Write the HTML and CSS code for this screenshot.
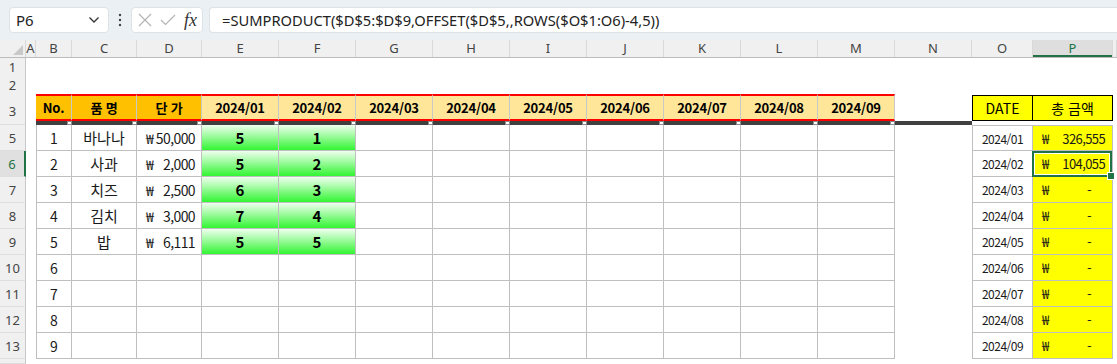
FILE: index.html
```html
<!DOCTYPE html>
<html lang="ko">
<head>
    <meta charset="UTF-8">
    <meta name="viewport" content="width=device-width, initial-scale=1.0">
    <title>총 금액 - SUMPRODUCT</title>
    <link rel="stylesheet" href="styles.css">
</head>
<body>
    <div class="toolbar">
        <div class="namebox">
            <span>P6</span>
            <svg width="12" height="8" viewBox="0 0 12 8"><polyline points="1.5,1.5 6,6 10.5,1.5" fill="none" stroke="#333" stroke-width="1.3"/></svg>
        </div>
        <svg class="dots" width="4" height="14" viewBox="0 0 4 14"><circle cx="2" cy="2" r="1.2"/><circle cx="2" cy="7" r="1.2"/><circle cx="2" cy="12" r="1.2"/></svg>
        <div class="fxbox">
            <svg width="14" height="14" viewBox="0 0 14 14"><path d="M1 1L13 13M13 1L1 13" stroke="#b4b4b4" stroke-width="1.2" fill="none"/></svg>
            <svg width="16" height="12" viewBox="0 0 16 12"><polyline points="1,6 5.5,10.5 15,1" fill="none" stroke="#b4b4b4" stroke-width="1.2"/></svg>
            <span class="fx">fx</span>
        </div>
        <div class="formula">=SUMPRODUCT($D$5:$D$9,OFFSET($D$5,,ROWS($O$1:O6)-4,5))</div>
    </div>

    <div class="row colhead">
        <div class="corner"><svg width="10" height="10" viewBox="0 0 10 10"><polygon points="10,0 10,10 0,10" fill="#c9c9c9"/></svg></div>
        <div>A</div><div>B</div><div>C</div><div>D</div><div>E</div><div>F</div><div>G</div><div>H</div><div>I</div>
        <div>J</div><div>K</div><div>L</div><div>M</div><div>N</div><div>O</div><div class="on">P</div><div></div>
    </div>

    <div class="row r1"><div class="rh">1</div></div>
    <div class="row r1"><div class="rh">2</div></div>

    <div class="row r3">
        <div class="rh">3</div><div></div>
        <div class="hd key">No.</div><div class="hd key">품 명</div><div class="hd key">단 가</div>
        <div class="hd mon">2024/01</div><div class="hd mon">2024/02</div><div class="hd mon">2024/03</div>
        <div class="hd mon">2024/04</div><div class="hd mon">2024/05</div><div class="hd mon">2024/06</div>
        <div class="hd mon">2024/07</div><div class="hd mon">2024/08</div><div class="hd mon">2024/09</div>
        <div></div>
        <div class="yh">DATE</div><div class="yh">총 금액</div><div></div>
    </div>

    <div class="row r4">
        <div class="rh"></div><div></div>
        <div class="bar"><i></i></div><div class="bar"><i></i></div><div class="bar"><i></i></div>
        <div class="bar"><i></i></div><div class="bar"><i></i></div><div class="bar"><i></i></div>
        <div class="bar"><i></i></div><div class="bar"><i></i></div><div class="bar"><i></i></div>
        <div class="bar"><i></i></div><div class="bar"><i></i></div><div class="bar"><i></i></div>
        <div class="bar"></div>
    </div>

    <div class="row rd top">
        <div class="rh">5</div><div></div>
        <div class="c first">1</div><div class="c nm">바나나</div><div class="c won"><span>₩</span><span>50,000</span></div>
        <div class="c grn">5</div><div class="c grn">1</div>
        <div class="c"></div><div class="c"></div><div class="c"></div><div class="c"></div><div class="c"></div><div class="c"></div><div class="c"></div>
        <div></div>
        <div class="c first dt">2024/01</div><div class="c amt"><span>₩</span><span>326,555</span></div><div></div>
    </div>
    <div class="row rd">
        <div class="rh on">6</div><div></div>
        <div class="c first">2</div><div class="c nm">사과</div><div class="c won"><span>₩</span><span>2,000</span></div>
        <div class="c grn">5</div><div class="c grn">2</div>
        <div class="c"></div><div class="c"></div><div class="c"></div><div class="c"></div><div class="c"></div><div class="c"></div><div class="c"></div>
        <div></div>
        <div class="c first dt">2024/02</div><div class="c amt cur"><span>₩</span><span>104,055</span></div><div></div>
    </div>
    <div class="row rd">
        <div class="rh">7</div><div></div>
        <div class="c first">3</div><div class="c nm">치즈</div><div class="c won"><span>₩</span><span>2,500</span></div>
        <div class="c grn">6</div><div class="c grn">3</div>
        <div class="c"></div><div class="c"></div><div class="c"></div><div class="c"></div><div class="c"></div><div class="c"></div><div class="c"></div>
        <div></div>
        <div class="c first dt">2024/03</div><div class="c amt"><span>₩</span><span class="dash">-</span></div><div></div>
    </div>
    <div class="row rd">
        <div class="rh">8</div><div></div>
        <div class="c first">4</div><div class="c nm">김치</div><div class="c won"><span>₩</span><span>3,000</span></div>
        <div class="c grn">7</div><div class="c grn">4</div>
        <div class="c"></div><div class="c"></div><div class="c"></div><div class="c"></div><div class="c"></div><div class="c"></div><div class="c"></div>
        <div></div>
        <div class="c first dt">2024/04</div><div class="c amt"><span>₩</span><span class="dash">-</span></div><div></div>
    </div>
    <div class="row rd">
        <div class="rh">9</div><div></div>
        <div class="c first">5</div><div class="c nm">밥</div><div class="c won"><span>₩</span><span>6,111</span></div>
        <div class="c grn">5</div><div class="c grn">5</div>
        <div class="c"></div><div class="c"></div><div class="c"></div><div class="c"></div><div class="c"></div><div class="c"></div><div class="c"></div>
        <div></div>
        <div class="c first dt">2024/05</div><div class="c amt"><span>₩</span><span class="dash">-</span></div><div></div>
    </div>
    <div class="row rd">
        <div class="rh">10</div><div></div>
        <div class="c first">6</div><div class="c"></div><div class="c"></div>
        <div class="c"></div><div class="c"></div><div class="c"></div><div class="c"></div><div class="c"></div>
        <div class="c"></div><div class="c"></div><div class="c"></div><div class="c"></div>
        <div></div>
        <div class="c first dt">2024/06</div><div class="c amt"><span>₩</span><span class="dash">-</span></div><div></div>
    </div>
    <div class="row rd">
        <div class="rh">11</div><div></div>
        <div class="c first">7</div><div class="c"></div><div class="c"></div>
        <div class="c"></div><div class="c"></div><div class="c"></div><div class="c"></div><div class="c"></div>
        <div class="c"></div><div class="c"></div><div class="c"></div><div class="c"></div>
        <div></div>
        <div class="c first dt">2024/07</div><div class="c amt"><span>₩</span><span class="dash">-</span></div><div></div>
    </div>
    <div class="row rd">
        <div class="rh">12</div><div></div>
        <div class="c first">8</div><div class="c"></div><div class="c"></div>
        <div class="c"></div><div class="c"></div><div class="c"></div><div class="c"></div><div class="c"></div>
        <div class="c"></div><div class="c"></div><div class="c"></div><div class="c"></div>
        <div></div>
        <div class="c first dt">2024/08</div><div class="c amt"><span>₩</span><span class="dash">-</span></div><div></div>
    </div>
    <div class="row rd">
        <div class="rh">13</div><div></div>
        <div class="c first">9</div><div class="c"></div><div class="c"></div>
        <div class="c"></div><div class="c"></div><div class="c"></div><div class="c"></div><div class="c"></div>
        <div class="c"></div><div class="c"></div><div class="c"></div><div class="c"></div>
        <div></div>
        <div class="c first dt">2024/09</div><div class="c amt"><span>₩</span><span class="dash">-</span></div><div></div>
    </div>
    <div class="row r14"><div class="rh"></div></div>
</body>
</html>
```

FILE: styles.css
```css
* {
    box-sizing: border-box;
}
body {
    margin: 0;
    width: 1117px;
    height: 364px;
    overflow: hidden;
    background: #fff;
    color: #1a1a1a;
    font-family: "Noto Sans CJK KR", "Noto Sans", sans-serif;
}

/* formula bar */
.toolbar {
    height: 40px;
    background: #eaf0f3;
    display: flex;
    align-items: center;
    padding-left: 9px;
}
.namebox {
    width: 100px;
    height: 26px;
    background: #fff;
    border: 1px solid #dde2e5;
    border-radius: 4px;
    display: flex;
    align-items: center;
    justify-content: space-between;
    padding: 0 8px 0 6px;
    font-family: "Noto Sans", sans-serif;
    font-size: 15px;
    color: #222;
}
.dots {
    fill: #444;
    margin: 0 9px 0 9px;
}
.fxbox {
    width: 72px;
    height: 26px;
    background: #fff;
    border: 1px solid #dde2e5;
    border-radius: 4px;
    display: flex;
    align-items: center;
    padding-left: 6px;
    gap: 8px;
}
.fx {
    font-family: "Liberation Serif", serif;
    font-style: italic;
    font-size: 18px;
    color: #333;
    line-height: 1;
}
.formula {
    flex: 1;
    height: 26px;
    margin-left: 6px;
    background: #fff;
    border: 1px solid #dde2e5;
    border-right: none;
    border-radius: 4px 0 0 4px;
    padding-left: 12px;
    font-family: "Noto Sans", sans-serif;
    font-size: 14.7px;
    line-height: 24px;
    color: #222;
    white-space: nowrap;
}

/* sheet grid */
.row {
    display: grid;
    grid-template-columns: 26px 10px 36px 65px 65px repeat(10, 77px) 61px 80px 1fr;
}
.colhead {
    height: 18px;
    background: #f0f0f0;
    border-bottom: 1px solid #bcbcbc;
    font-family: "Noto Sans", sans-serif;
    font-size: 13px;
    color: #444;
}
.colhead div {
    text-align: center;
    line-height: 17px;
    border-right: 1px solid #d9d9d9;
}
.colhead .corner {
    display: flex;
    align-items: flex-end;
    justify-content: flex-end;
    padding: 0 2px 2px 0;
}
.colhead .on {
    background: #dedede;
    color: #217346;
    box-shadow: inset 0 -2px 0 #217346;
}
.rh {
    background: #f0f0f0;
    border-right: 1px solid #c8c8c8;
    border-bottom: 1px solid #dedede;
    display: flex;
    align-items: center;
    justify-content: center;
    font-family: "Noto Sans", sans-serif;
    font-size: 13px;
    color: #444;
}
.rh.on {
    background: #e0e0e0;
    color: #217346;
    border-right: 2px solid #217346;
}
.r1 {
    height: 18px;
}
.r3 {
    height: 27px;
}
.r3 .rh {
    border-bottom: none;
    padding-top: 6px;
}
.r4 {
    height: 4px;
}
.rd {
    height: 26px;
    font-size: 14px;
}
.r14 {
    height: 5px;
}

/* header row */
.hd {
    border-top: 2px solid #ff0000;
    border-bottom: 2px solid #ff0000;
    border-right: 1px solid #c9c9c9;
    display: flex;
    align-items: center;
    justify-content: center;
    font-size: 13px;
    font-weight: 700;
    letter-spacing: -0.2px;
    color: #000;
}
.key {
    background: #ffc000;
}
.mon {
    background: #ffe699;
}
.yh {
    margin-top: 1px;
    background: #ffff00;
    border: 1px solid #000;
    display: flex;
    align-items: center;
    justify-content: center;
    font-size: 14px;
    color: #000;
}
.yh + .yh {
    border-left: none;
}
.bar {
    background: #404040;
    display: flex;
    justify-content: flex-end;
}
.bar i {
    width: 5px;
    height: 4px;
    background: #fff;
    border: 1px solid #8c8c8c;
}

/* data cells */
.c {
    border-right: 1px solid #bfbfbf;
    border-bottom: 1px solid #bfbfbf;
    display: flex;
    align-items: center;
    justify-content: center;
}
.c.first {
    border-left: 1px solid #bfbfbf;
}
.top .dt,
.top .amt {
    border-top: 1px solid #bfbfbf;
}
.nm {
    font-size: 15px;
}
.won {
    justify-content: space-between;
    padding: 0 6px 0 9px;
    letter-spacing: -0.6px;
}
.grn {
    background: linear-gradient(#f0fff0, #33f533);
    font-size: 15px;
    font-weight: 700;
    color: #000;
}
.dt {
    font-size: 12px;
    letter-spacing: -0.5px;
}
.amt {
    background: #ffff00;
    justify-content: space-between;
    padding: 0 7px 0 9px;
    font-size: 13px;
    letter-spacing: -0.6px;
}
.amt .dash {
    margin-right: 14px;
}
.cur {
    position: relative;
}
.cur::after {
    content: "";
    position: absolute;
    left: -1px;
    top: 0;
    right: 0;
    bottom: -1px;
    border: 2px solid #217346;
    box-shadow: inset 0 0 0 1px #fff;
}
.cur::before {
    content: "";
    position: absolute;
    right: -3px;
    bottom: -4px;
    width: 6px;
    height: 6px;
    background: #217346;
    border: 1px solid #fff;
    z-index: 1;
}
```
